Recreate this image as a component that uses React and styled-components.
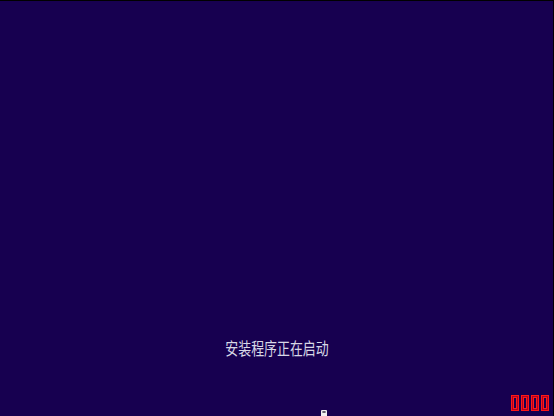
import React from 'react'
import styled, { createGlobalStyle } from 'styled-components'

const GlobalStyle = createGlobalStyle`
  html, body {
    margin: 0;
    padding: 0;
    background: #170050;
  }
  * {
    box-sizing: border-box;
  }
`

const Screen = styled.div`
  position: relative;
  width: 554px;
  height: 416px;
  background: #170050;
  border-top: 1px solid #000;
  border-right: 1px solid #000;
  display: flex;
  flex-direction: column;
  justify-content: flex-end;
  align-items: center;
  overflow: hidden;
`

const Message = styled.div`
  height: 20px;
  line-height: 20px;
  font-family: "Noto Sans CJK SC", "Noto Sans", sans-serif;
  font-size: 17px;
  color: #d8d8e6;
  white-space: nowrap;
  transform: scaleX(0.76);
`

const Footer = styled.div`
  align-self: stretch;
  display: flex;
  justify-content: flex-end;
  gap: 2px;
  margin-top: 37px;
  padding: 0 4px 5px 0;
`

const Tofu = styled.span`
  width: 8px;
  height: 16px;
  border: 1px solid #ff1818;
  box-shadow: inset 0 0 0 1px #b00020, inset 0 0 0 2px #ff1818;
`

const Cursor = styled.svg`
  position: absolute;
  left: 320px;
  top: 409px;
`

export default function App() {
  return (
    <>
      <GlobalStyle />
      <Screen>
        <Message>安装程序正在启动</Message>
        <Footer>
          {[0, 1, 2, 3].map(i => <Tofu key={i} />)}
        </Footer>
        <Cursor width="8" height="7" viewBox="0 0 8 7">
          <rect x="1" y="0" width="6" height="7" rx="1" fill="#f0f0f0" />
          <rect x="2" y="1" width="4" height="2" fill="#9a9aa8" />
          <rect x="3.5" y="1" width="1" height="2" fill="#333" />
        </Cursor>
      </Screen>
    </>
  )
}
